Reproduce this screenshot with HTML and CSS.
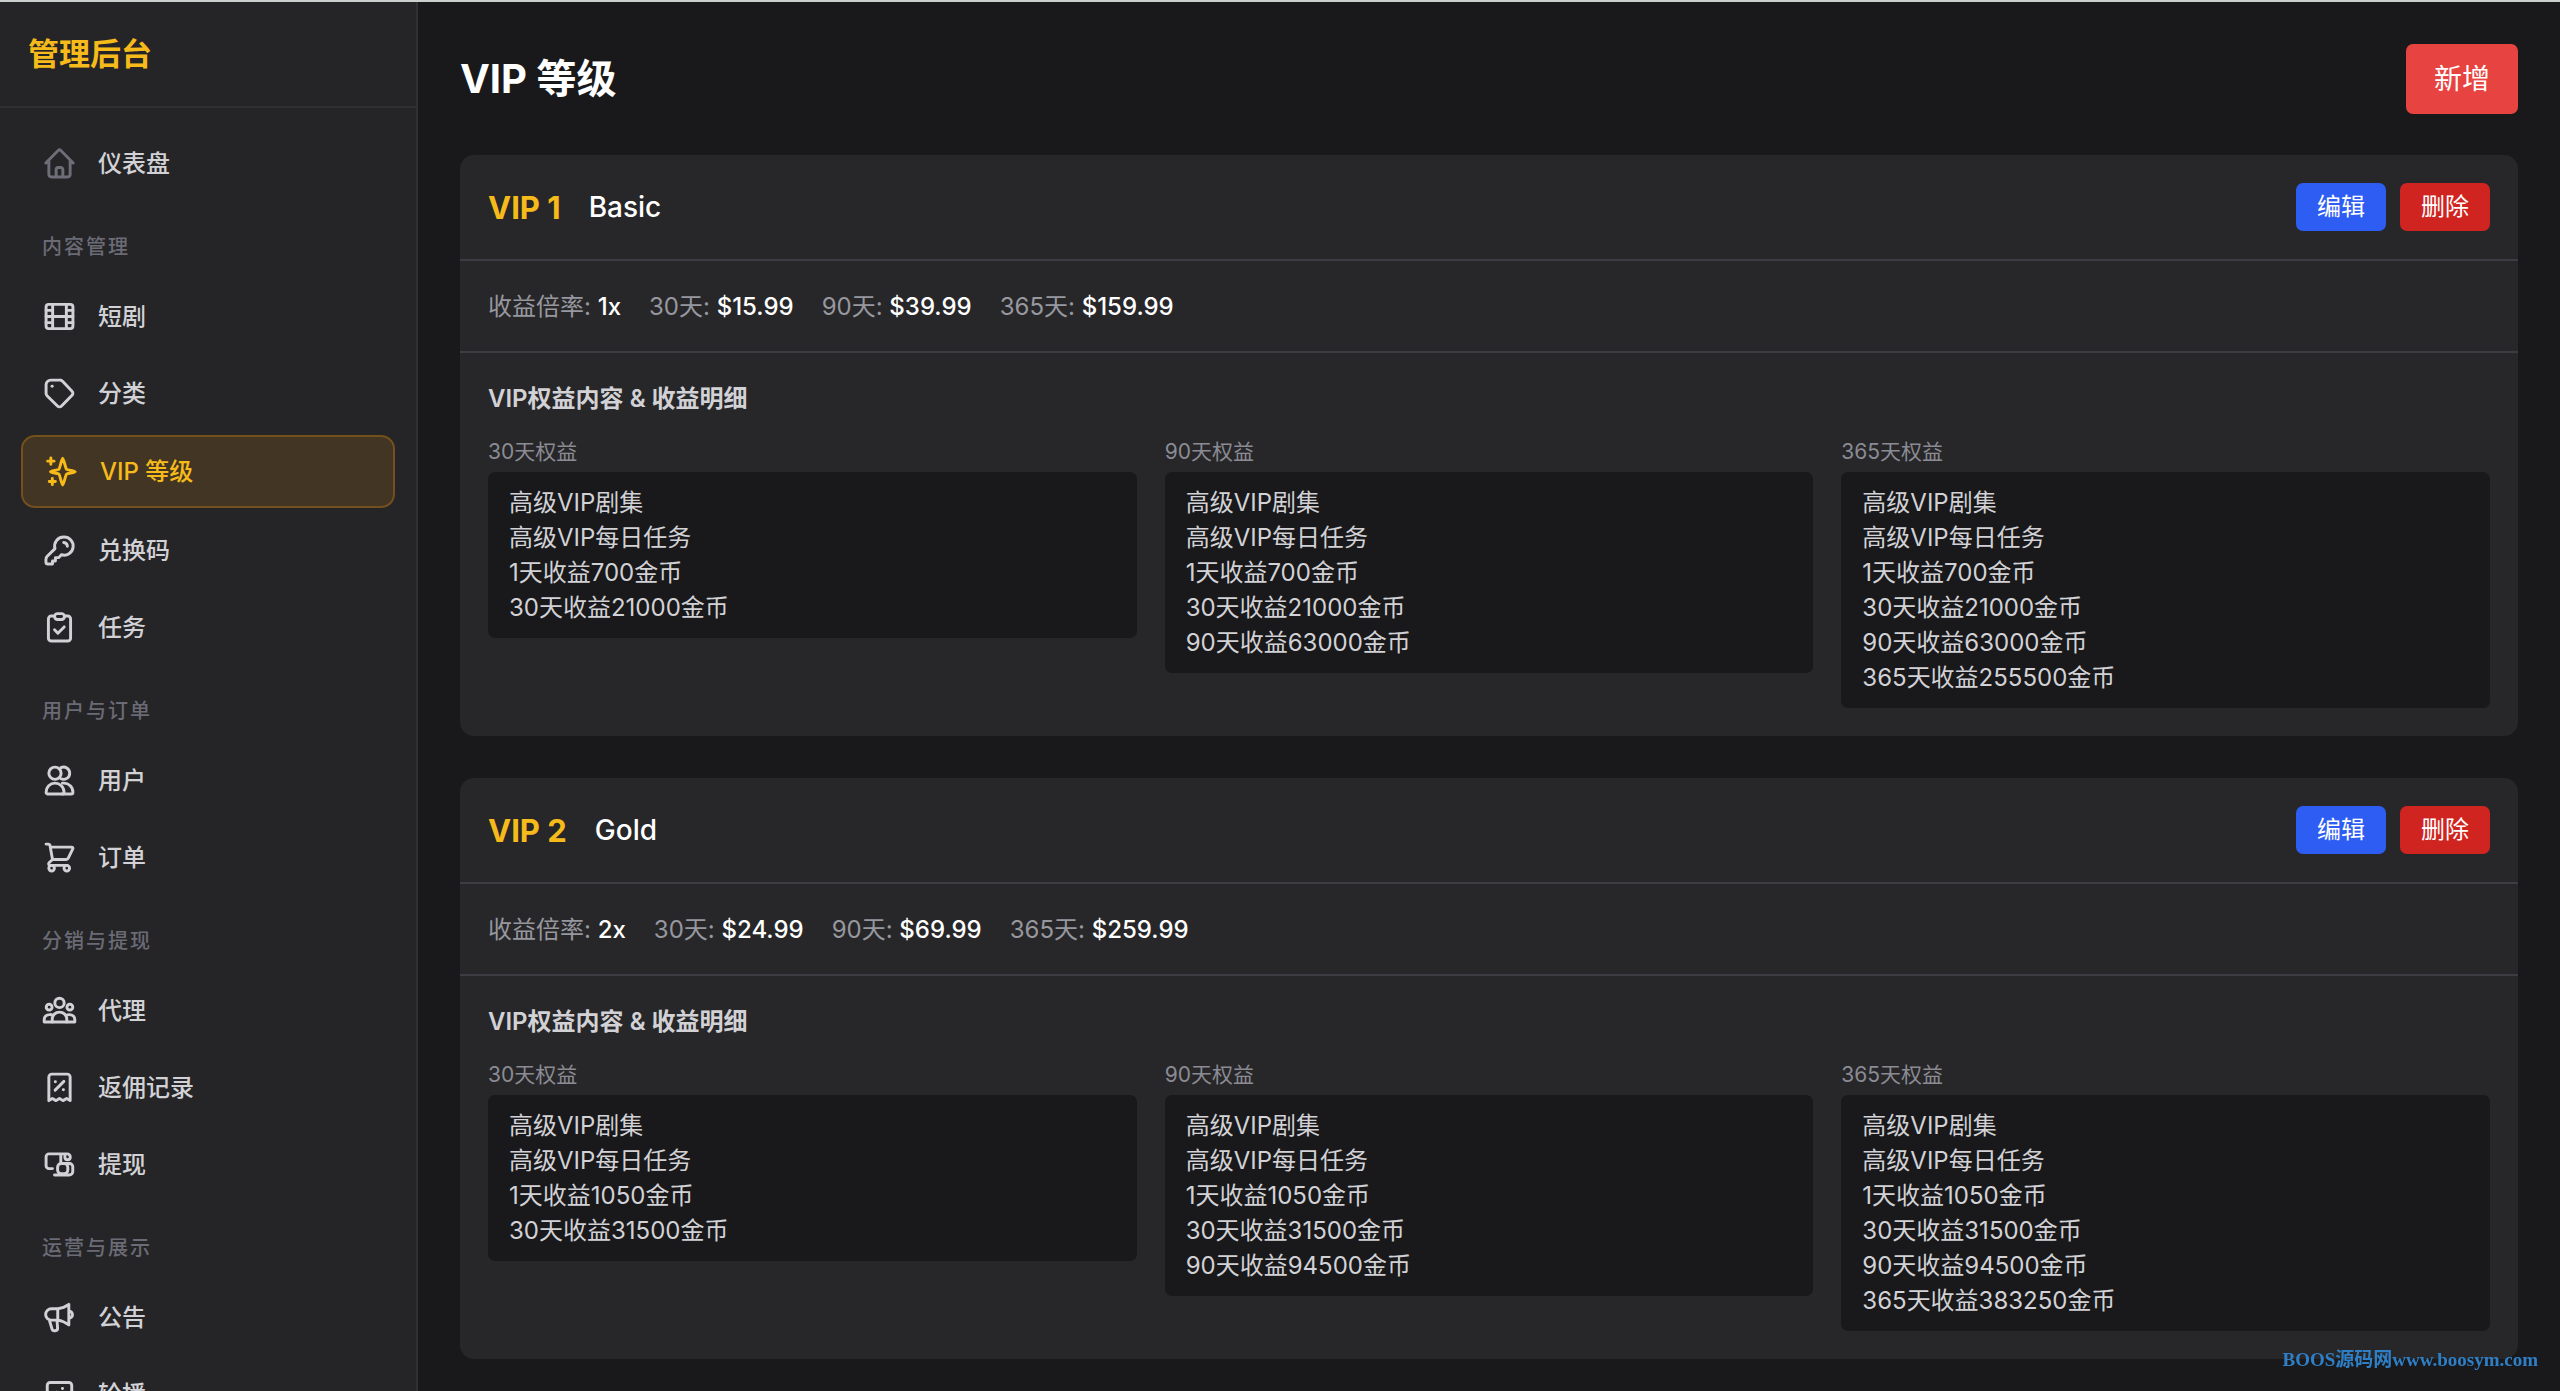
FILE: index.html
```html
<!DOCTYPE html>
<html lang="zh-CN">
<head>
    <meta charset="UTF-8">
    <meta name="viewport" content="width=device-width, initial-scale=1.0">
    <title>管理后台</title>
    <link rel="stylesheet" href="styles.css">
</head>
<body>
    <aside class="sidebar">
        <div class="brand">管理后台</div>
        <nav class="menu">
            <a href="#" class="menu-item home">
                <svg class="icon" viewBox="0 0 24 24"><path d="M2.6 11.6 11.1 3.1a1.3 1.3 0 0 1 1.8 0l8.5 8.5M4.7 9.8v9.6a1.8 1.8 0 0 0 1.8 1.8h11a1.8 1.8 0 0 0 1.8-1.8V9.8M9.7 21v-4.8a1.5 1.5 0 0 1 1.5-1.5h1.6a1.5 1.5 0 0 1 1.5 1.5V21"/></svg>
                <span>仪表盘</span>
            </a>

            <h3 class="menu-label">内容管理</h3>
            <a href="#" class="menu-item">
                <svg class="icon" viewBox="0 0 24 24"><rect x="2.8" y="3.7" width="18.4" height="16.6" rx="1.8"/><path d="M7.3 3.7v16.6M16.7 3.7v16.6M7.3 12h9.4M2.8 7.8h4.5M2.8 12h4.5M2.8 16.2h4.5M16.7 7.8h4.5M16.7 12h4.5M16.7 16.2h4.5"/></svg>
                <span>短剧</span>
            </a>
            <a href="#" class="menu-item">
                <svg class="icon" viewBox="0 0 24 24"><path d="M6 2.8h6.2a2.6 2.6 0 0 1 1.9.8l6.5 6.8a2 2 0 0 1 0 2.8l-7.2 7.4a2 2 0 0 1-2.8 0l-7-6.9a2.6 2.6 0 0 1-.8-1.9V6A3.2 3.2 0 0 1 6 2.8Z"/><path d="M6.9 7h.1"/></svg>
                <span>分类</span>
            </a>
            <a href="#" class="menu-item active">
                <svg class="icon" viewBox="0 0 24 24"><path d="M12.8 2.9c.6 0 2 6.9 2.6 7.5.6.6 6 1.1 6 1.7s-5.4 1.2-6 1.8c-.6.6-2 7.3-2.6 7.3s-1.9-6.7-2.5-7.3c-.6-.6-5.9-1.2-5.9-1.8s5.3-1.1 5.9-1.7c.6-.6 1.9-7.5 2.5-7.5Z"/><path d="M4.7 2.7v4.4M2.5 4.9h4.4M5.7 16.8v4.2M3.6 18.9h4.2"/></svg>
                <span>VIP 等级</span>
            </a>
            <a href="#" class="menu-item">
                <svg class="icon" viewBox="0 0 24 24"><path d="M14.9 2.8a6.2 6.2 0 0 0-6 7.900L3.600 16a3 3 0 0 0-.9 2.100v1.700c0 .8.600 1.400 1.400 1.400h3.100v-2h2v-2.300h2.300l1.800-2a6.200 6.200 0 1 0 1.600-12.100Z"/><path d="M14.900 6.500a2.800 2.800 0 0 1 2.500 2.600"/></svg>
                <span>兑换码</span>
            </a>
            <a href="#" class="menu-item">
                <svg class="icon" viewBox="0 0 24 24"><path d="M8.600 4.100H6.400a2 2 0 0 0-2 2v13.200a2 2 0 0 0 2 2h11.200a2 2 0 0 0 2-2V6.100a2 2 0 0 0-2-2h-2.200"/><rect x="8.600" y="2.500" width="6.800" height="4" rx="2"/><path d="m8.600 13.600 2.300 2.300 4.300-4.300"/></svg>
                <span>任务</span>
            </a>

            <h3 class="menu-label">用户与订单</h3>
            <a href="#" class="menu-item">
                <svg class="icon" viewBox="0 0 24 24"><circle cx="8.900" cy="7" r="4.200"/><path d="M13 3.200A4.200 4.200 0 1 1 13 10.800"/><path d="M2.800 20c0-3.500 2.700-6.200 6.100-6.200s6.200 2.700 6.200 6.200c0 .7-.5 1.200-1.200 1.200H4c-.7 0-1.200-.5-1.200-1.200Z"/><path d="M14 13.800h1c3.400 0 6.200 2.700 6.200 6.200 0 .7-.5 1.200-1.200 1.200h-6"/></svg>
                <span>用户</span>
            </a>
            <a href="#" class="menu-item">
                <svg class="icon" viewBox="0 0 24 24"><path d="M2.800 2.800h1.500c.7 0 1.100.4 1.200 1l1.700 9.600M5.700 4.900h14.600c.8 0 1.100.6.800 1.200l-3.100 6.400c-.3.600-.8.900-1.400.900H7.200l-2.200 2c-.9.900-.4 2 .8 2h11.400"/><circle cx="6.600" cy="19.300" r="1.900"/><circle cx="17" cy="19.300" r="1.900"/></svg>
                <span>订单</span>
            </a>

            <h3 class="menu-label">分销与提现</h3>
            <a href="#" class="menu-item">
                <svg class="icon" viewBox="0 0 24 24"><circle cx="12" cy="6.800" r="3.200"/><circle cx="4.900" cy="9.700" r="2"/><circle cx="19.100" cy="9.700" r="2"/><path d="M7 19.900v-1.900c0-2.800 2.200-4.900 5-4.900s5 2.100 5 4.900v1.900"/><path d="M7.500 15.500a3.700 3.700 0 0 0-2.300-.7c-2.200 0-3.700 1.600-3.700 3.700v1.400h21v-1.400c0-2.100-1.500-3.700-3.700-3.700-.9 0-1.700.2-2.300.7"/></svg>
                <span>代理</span>
            </a>
            <a href="#" class="menu-item">
                <svg class="icon" viewBox="0 0 24 24"><path d="M4.700 21V4.800a2 2 0 0 1 2-2h10.600a2 2 0 0 1 2 2V21l-2.400-1.500-2.500 1.500-2.400-1.500L9.600 21l-2.500-1.500Z"/><path d="m9 13.800 6-6M9.100 8.100h.1M14.600 13.500h.1"/></svg>
                <span>返佣记录</span>
            </a>
            <a href="#" class="menu-item">
                <svg class="icon" viewBox="0 0 24 24"><path d="M7.200 14.800H4.800a2 2 0 0 1-2-2V6.700a2 2 0 0 1 2-2h12.400c1.300 0 2.200 1 2.200 2.100 0 1-.7 1.900-1.900 1.900-1.100 0-1.800-.8-1.800-1.900V4.900M12.900 4.900v5.600"/><rect x="10.700" y="11.300" width="7" height="7" rx="2.500"/><path d="M15.500 11.300h3.300a2.300 2.300 0 0 1 2.300 2.300v3.200a2.400 2.400 0 0 1-2.400 2.400H8.600"/></svg>
                <span>提现</span>
            </a>

            <h3 class="menu-label">运营与展示</h3>
            <a href="#" class="menu-item">
                <svg class="icon" viewBox="0 0 24 24"><path d="M10.800 6H6.400a3.900 3.900 0 0 0 0 7.800h4.400ZM10.800 6c2.700-.3 5.200-1.200 7.600-3v14.100c-2.400-1.900-4.900-3-7.600-3.300M18.400 7.600a2.500 2.500 0 0 1 0 5M5 13.600l1.900 6.400c.5 1.700 3.900 1.400 3.800-.6l-.4-5.600"/></svg>
                <span>公告</span>
            </a>
            <a href="#" class="menu-item">
                <svg class="icon" viewBox="0 0 24 24"><rect x="3.600" y="3.800" width="16.800" height="16.800" rx="2"/><path d="M14 7.900h.1M3.600 17l5.700-6.200c.5-.6 1.100-.6 1.600 0l8.700 9"/></svg>
                <span>轮播</span>
            </a>
        </nav>
    </aside>

    <main class="content">
        <div class="page-head">
            <h1>VIP 等级</h1>
            <button type="button" class="btn btn-add">新增</button>
        </div>

        <section class="card">
            <div class="card-head">
                <h2 class="level">VIP 1</h2>
                <span class="name">Basic</span>
                <button type="button" class="btn btn-edit">编辑</button>
                <button type="button" class="btn btn-delete">删除</button>
            </div>
            <div class="prices">
                <span>收益倍率: <b>1x</b></span>
                <span>30天: <b>$15.99</b></span>
                <span>90天: <b>$39.99</b></span>
                <span>365天: <b>$159.99</b></span>
            </div>
            <div class="benefits">
                <h3>VIP权益内容 &amp; 收益明细</h3>
                <div class="benefit-grid">
                    <div>
                        <h4>30天权益</h4>
                        <div class="benefit-box">
                            <p>高级VIP剧集</p>
                            <p>高级VIP每日任务</p>
                            <p>1天收益700金币</p>
                            <p>30天收益21000金币</p>
                        </div>
                    </div>
                    <div>
                        <h4>90天权益</h4>
                        <div class="benefit-box">
                            <p>高级VIP剧集</p>
                            <p>高级VIP每日任务</p>
                            <p>1天收益700金币</p>
                            <p>30天收益21000金币</p>
                            <p>90天收益63000金币</p>
                        </div>
                    </div>
                    <div>
                        <h4>365天权益</h4>
                        <div class="benefit-box">
                            <p>高级VIP剧集</p>
                            <p>高级VIP每日任务</p>
                            <p>1天收益700金币</p>
                            <p>30天收益21000金币</p>
                            <p>90天收益63000金币</p>
                            <p>365天收益255500金币</p>
                        </div>
                    </div>
                </div>
            </div>
        </section>

        <section class="card">
            <div class="card-head">
                <h2 class="level">VIP 2</h2>
                <span class="name">Gold</span>
                <button type="button" class="btn btn-edit">编辑</button>
                <button type="button" class="btn btn-delete">删除</button>
            </div>
            <div class="prices">
                <span>收益倍率: <b>2x</b></span>
                <span>30天: <b>$24.99</b></span>
                <span>90天: <b>$69.99</b></span>
                <span>365天: <b>$259.99</b></span>
            </div>
            <div class="benefits">
                <h3>VIP权益内容 &amp; 收益明细</h3>
                <div class="benefit-grid">
                    <div>
                        <h4>30天权益</h4>
                        <div class="benefit-box">
                            <p>高级VIP剧集</p>
                            <p>高级VIP每日任务</p>
                            <p>1天收益1050金币</p>
                            <p>30天收益31500金币</p>
                        </div>
                    </div>
                    <div>
                        <h4>90天权益</h4>
                        <div class="benefit-box">
                            <p>高级VIP剧集</p>
                            <p>高级VIP每日任务</p>
                            <p>1天收益1050金币</p>
                            <p>30天收益31500金币</p>
                            <p>90天收益94500金币</p>
                        </div>
                    </div>
                    <div>
                        <h4>365天权益</h4>
                        <div class="benefit-box">
                            <p>高级VIP剧集</p>
                            <p>高级VIP每日任务</p>
                            <p>1天收益1050金币</p>
                            <p>30天收益31500金币</p>
                            <p>90天收益94500金币</p>
                            <p>365天收益383250金币</p>
                        </div>
                    </div>
                </div>
            </div>
        </section>
    </main>

    <div class="watermark">BOOS源码网www.boosym.com</div>
</body>
</html>
```
FILE: styles.css
```css
* {
    box-sizing: border-box;
}

body {
    margin: 0;
    height: 100vh;
    display: flex;
    overflow: hidden;
    border-top: 2px solid #cdd1cd;
    background: #19191b;
    color: #fff;
    font-family: Inter, "Noto Sans CJK SC", sans-serif;
    font-size: 24px;
    line-height: 35px;
}

h1, h2, h3, h4, p {
    margin: 0;
}

/* sidebar */
.sidebar {
    flex: 0 0 418px;
    overflow: hidden;
    background: #252527;
    border-right: 2px solid #303033;
}

.brand {
    padding: 30px 28px;
    border-bottom: 2px solid #303033;
    color: #f6bb1b;
    font-size: 31px;
    font-weight: 700;
    line-height: 44px;
}

.menu {
    display: flex;
    flex-direction: column;
    gap: 7px;
    padding: 20px 21px;
}

.menu-item {
    display: flex;
    align-items: center;
    gap: 21px;
    height: 70px;
    padding: 0 21px;
    border-radius: 14px;
    color: #d2d2d6;
    font-weight: 500;
    text-decoration: none;
}

.menu-item.active {
    height: 73px;
    background: #433523;
    border: 2px solid #74501c;
    color: #f6bb1b;
}

.icon {
    width: 35px;
    height: 35px;
    fill: none;
    stroke: currentColor;
    stroke-width: 2;
    stroke-linecap: round;
    stroke-linejoin: round;
}

.home .icon {
    color: #6e6e79;
}

.menu-label {
    margin: 28px 0 13px;
    padding: 0 21px;
    color: #6b6b76;
    font-size: 20px;
    font-weight: 500;
    line-height: 28px;
    letter-spacing: 2px;
}

/* main area */
.content {
    flex: 1;
    padding: 42px;
}

.page-head {
    display: flex;
    align-items: center;
    justify-content: space-between;
    margin-bottom: 41px;
}

.page-head h1 {
    font-size: 40px;
    line-height: 56px;
}

.btn {
    padding: 6px 21px;
    border: 0;
    border-radius: 7px;
    color: #fff;
    font: inherit;
    line-height: 36px;
    cursor: pointer;
}

.btn-add {
    padding: 14px 28px;
    background: #e74340;
    font-size: 28px;
    line-height: 42px;
}

.btn-edit {
    margin-left: auto;
    background: #2e5df4;
}

.btn-delete {
    margin-left: 14px;
    background: #d02421;
}

.card {
    margin-bottom: 42px;
    border-radius: 14px;
    background: #272729;
}

.card-head {
    display: flex;
    align-items: center;
    padding: 28px;
    border-bottom: 2px solid #3c3c42;
}

.level {
    margin-right: 28px;
    color: #f6bb1b;
    font-size: 31px;
}

.name {
    font-size: 28px;
    font-weight: 500;
}

.prices {
    display: flex;
    gap: 28px;
    padding: 29px 28px 27px;
    border-bottom: 2px solid #3c3c42;
    color: #97979f;
    line-height: 34px;
}

.prices b {
    color: #fff;
    font-weight: 500;
}

.benefits {
    padding: 28px;
}

.benefits h3 {
    margin-bottom: 22px;
    color: #d2d2d6;
    font-size: 24px;
    font-weight: 600;
}

.benefit-grid {
    display: grid;
    grid-template-columns: repeat(3, 1fr);
    align-items: start;
    gap: 28px;
}

.benefit-grid h4 {
    margin-bottom: 6px;
    color: #8b8b94;
    font-size: 21px;
    font-weight: 400;
    line-height: 28px;
}

.benefit-box {
    padding: 13px 21px;
    border-radius: 7px;
    background: #19191b;
    color: #d2d2d6;
}

.watermark {
    position: fixed;
    right: 22px;
    bottom: 20px;
    color: #2f7fc6;
    font-family: "Liberation Serif", "Noto Sans CJK SC", serif;
    font-size: 19px;
    font-weight: 700;
    line-height: 22px;
}
```
